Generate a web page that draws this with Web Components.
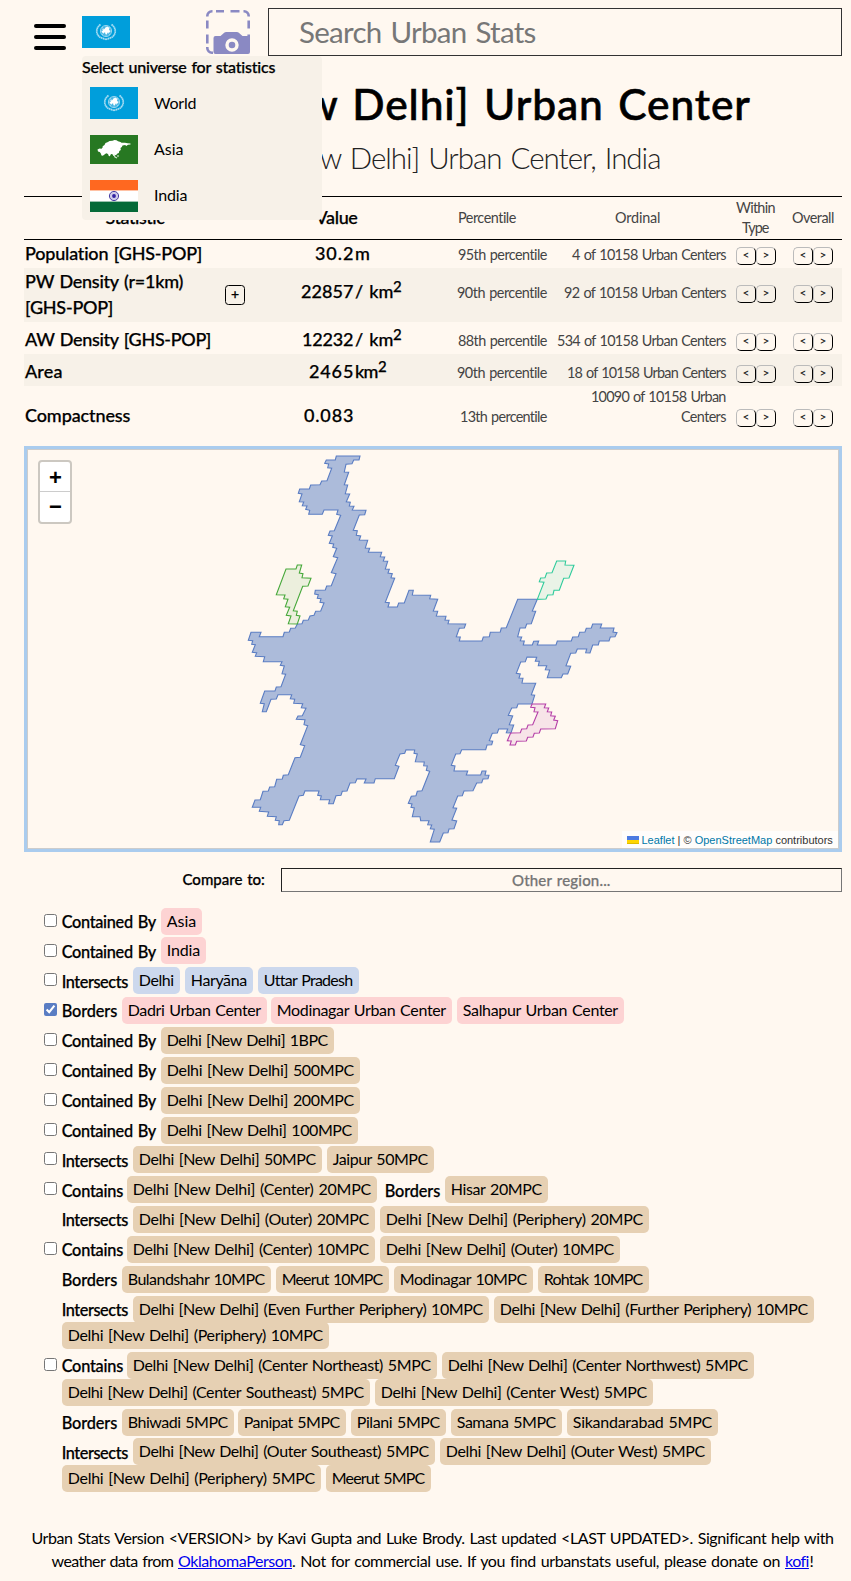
<!DOCTYPE html>
<html lang="en"><head><meta charset="utf-8"><title>Urban Stats</title>
<style>
html,body{margin:0;padding:0;background:#fff8f0;color:#000;font-family:Lato,"Liberation Sans",sans-serif}
</style></head><body>
<us-page></us-page>
<script>
const define=(n,c)=>customElements.define(n,c);
class Base extends HTMLElement{
  paint(html){(this.shadowRoot||this.attachShadow({mode:'open'})).innerHTML=html}
}
/* A single line of text whose tracking is adjusted to fill the width in "w". */
define('us-fit',class extends Base{
  connectedCallback(){
    const w=+this.getAttribute('w');
    this.paint(`<style>:host{display:block;white-space:nowrap;flex:none;width:${w}px}span{display:inline-block;text-decoration:inherit;word-spacing:.07em}</style><span><slot></slot></span>`);
    const s=this.shadowRoot.querySelector('span'),n=Math.max(1,this.textContent.length);
    let ls=0;
    for(let i=0;i<3;i++){ls+=(w+.4-(s.getBoundingClientRect().width-ls))/n;s.style.letterSpacing=ls.toFixed(3)+'px'}
  }
});
define('us-flag',class extends Base{
  connectedCallback(){
    const un=`<svg viewBox="0 0 48 32" width="48" height="32"><rect width="48" height="32" fill="#009edb"/>
      <g fill="none" stroke="#d5eefa"><circle cx="24" cy="15" r="5.600" stroke-width=".6" fill="#45b5e3"/>
      <path d="M24 9.500v11M18.500 15h11M20 11l8 8M28 11l-8 8" stroke-width=".4"/>
      <path d="M18.500 8.500C13.500 12 13.500 18.500 18.500 21.500L24 23.500M29.500 8.500C34.500 12 34.500 18.500 29.500 21.500L24 23.500" stroke="#a9ddf3" stroke-width="1.700" stroke-dasharray="1.6 .4"/></g>
      <path d="M20 12.500l2 1 1.500-2 2-1 2 1.500-.5 2 1.500 1-1.500 2-1.500-.5-.5 2-1.500-.5-.5-2-2 1.500-1.500-2 1.500-1z" fill="#fff"/></svg>`;
    const asia=`<svg viewBox="0 0 48 29" width="48" height="29"><rect width="48" height="29" fill="#277822"/>
      <path fill="#fff" d="M7.500 14.500l2-1 2 .3 1-1 .2-1.600 1.800-1.200 1-2 2.500-1 1.500-1 3-.3 2-.7 2 .3 1.500 1 2.500.7 1 .8 3.500 0 2.500.5 3 .2 0 .9-2.500.3-1.800 1.200-1-.8-2.700.5-.7 1.500-1.300.8.3 2-1.500 1.200-.5 1.800-1.700.9-1 1.500-1-.2-.6 1.500-1.200-.9-.8-1.400-1.500-.4-1.200 2.400-1-.4-.8-2-1.800-.6-1.700 1.200-1.700 1.300-1.300-.3-.8-2.300-1-1.200-1.700-.5z"/>
      <path d="M24 19.500l1 2.500 2 1M28 20v2" stroke="#d5e6d2" stroke-width="1.100" fill="none"/></svg>`;
    const india=`<svg viewBox="0 0 48 32" width="48" height="32"><rect width="48" height="32" fill="#fff"/><rect width="48" height="10.400" fill="#ff6820"/><rect y="21.600" width="48" height="10.400" fill="#046a38"/>
      <circle cx="24" cy="16" r="4.600" fill="#cfcbe9" stroke="#4b3fa5" stroke-width="1"/><circle cx="24" cy="16" r="1.900" fill="#3020a0"/></svg>`;
    this.paint(`<style>:host,svg{display:block}</style>${{un,asia,india}[this.getAttribute('kind')]}`);
  }
});
define('us-universe-menu',class extends Base{
  connectedCallback(){
    this.paint(`<style>:host{position:absolute;left:0;top:40px;width:240px;height:164px;box-sizing:border-box;background:#f7f1e8;border-radius:4px;z-index:5;font-size:16px;line-height:24px}
    .t{font-weight:500;-webkit-text-stroke:.25px #000;height:31px}.t us-fit{line-height:22px}
    .r{display:flex;align-items:center;gap:16px;padding-left:8px}.a{height:32px}.b{height:29px;margin:16px 0}.u us-fit{margin-top:-2px}</style>
    <div class="t"><us-fit w="193">Select universe for statistics</us-fit></div>
    <div class="r a"><us-flag kind="un"></us-flag><us-fit w="42">World</us-fit></div>
    <div class="r b u"><us-flag kind="asia"></us-flag><us-fit w="29">Asia</us-fit></div>
    <div class="r a u"><us-flag kind="india"></us-flag><us-fit w="33">India</us-fit></div>`);
  }
});
define('us-header',class extends Base{
  connectedCallback(){
    this.paint(`<style>:host{display:flex;height:64px;padding:0 9px 0 34px;align-items:flex-start}
    .m{width:32px;height:26px;margin-top:24px;display:flex;flex-direction:column;gap:7px}.m i{height:4px;background:#000;border-radius:2px}
    .u{position:relative;margin:16px 0 0 16px;width:48px}
    .c{margin:10px 0 0 76px}.c svg{display:block}
    .s{margin:8px 0 0 18px;width:574px;height:48px;box-sizing:border-box;border:1px solid #333;padding-left:30px;font-size:29.500px;line-height:46px;color:#777}</style>
    <div class="m"><i></i><i></i><i></i></div>
    <div class="u"><us-flag kind="un"></us-flag><us-universe-menu></us-universe-menu></div>
    <div class="c"><svg width="44" height="44" viewBox="0 0 44 44"><g fill="none" stroke="#8a89c3" stroke-width="2.600"><path d="M1.300 6.500V6a4.700 4.700 0 0 1 4.700-4.700h.5M10 1.300h8M24.500 1.300h9M37.500 1.300h.5a4.700 4.700 0 0 1 4.700 4.700v.5M1.300 10.500v8M1.300 24.500v9M42.700 10.500v8M42.700 24.500v4M1.300 37v1a4.700 4.700 0 0 0 4.700 4.700h1"/></g>
    <path fill="#8a89c3" d="M9.500 26h5l4-3.500q.7-.5 1.500-.5h11q.8 0 1.500.5l4 3.500H42q2 0 2 2v14q0 2-2 2H9.500q-2 0-2-2V28q0-2 2-2z"/><circle cx="26" cy="35" r="5" fill="none" stroke="#fff8f0" stroke-width="3.400"/></svg></div>
    <div class="s"><us-fit w="237">Search Urban Stats</us-fit></div>`);
  }
});
define('us-nav',class extends Base{
  connectedCallback(){
    this.paint(`<style>:host{display:flex;width:40px;height:18px}b{box-sizing:border-box;width:20px;height:18px;border:1.500px outset #333;border-color:#bbb #333 #333 #bbb;border-radius:5px;font:500 12px/14px Lato,sans-serif;text-align:center;color:#222}</style><b>&lt;</b><b>&gt;</b>`);
  }
});
define('us-stat',class extends Base{
  connectedCallback(){
    const a=k=>this.getAttribute(k)||'';
    const fit=s=>s.split(';').map(t=>{const[x,w]=t.split('|');return `<us-fit w="${w}">${x}</us-fit>`}).join('');
    const off=+a('base');
    this.paint(`<style>:host{display:grid;grid-template-columns:201px 128px 70px 124px 179px 10px 40px 17px 40px 9px;height:${a('h')}px;background:${a('bg')||'none'}}
    .n,.v,.w{font-weight:500;font-size:18px;line-height:26px;-webkit-text-stroke:.25px #000}
    .n{padding-left:1px;padding-top:${+a('nbase')-20}px}.v,.w{padding-top:${off-20}px}
    .v{display:flex;justify-content:flex-end}.w{padding-left:2px;display:flex}
    sup{font-size:15px;line-height:10px;margin-top:3px}
    .s{font-size:14.400px;line-height:20px;color:#444;padding-top:${off-15}px;display:flex;flex-direction:column;align-items:flex-end}
    .o{padding-top:${off-15-(a('ord').includes(';')?20:0)}px}
    us-nav{margin-top:${off-13}px}
    .p{display:inline-block;box-sizing:border-box;width:20px;height:20px;border:1.500px solid #000;border-radius:3.500px;margin:${off-13}px auto 0 0;font:500 14px/16px Lato;text-align:center;transform:translateY(${20-off}px)}</style>
    <div class="n">${fit(a('name'))}</div>
    <div class="v">${a('plus')?'<span class="p">+</span>':''}${fit(a('val'))}</div>
    <div class="w">${a('unit')?fit(a('unit')):''}${a('sq')?'<sup>2</sup>':''}</div>
    <div class="s">${fit(a('pct'))}</div><div class="s o">${fit(a('ord'))}</div><i></i><us-nav></us-nav><i></i><us-nav></us-nav>`);
  }
});
define('us-table',class extends Base{
  connectedCallback(){
    this.paint(`<style>:host{display:block;margin:0 9px 0 24px}
    .h{display:flex;align-items:center;height:42px;border:solid #000;border-width:1px 0;color:#444;font-size:14.400px;line-height:20px}
    .b{font-size:18px;font-weight:500;-webkit-text-stroke:.25px #000;color:#000;line-height:22px;margin-top:-2px}</style>
    <div class="h"><us-fit class="b" w="59" style="margin-left:81.500px">Statistic</us-fit><us-fit class="b" w="42" style="margin-left:151px">Value</us-fit>
    <us-fit w="58" style="margin-left:100.500px">Percentile</us-fit><us-fit w="45" style="margin-left:99px">Ordinal</us-fit>
    <div style="margin-left:76px;width:40px"><us-fit w="39">Within</us-fit><us-fit w="27" style="margin-left:6px">Type</us-fit></div><us-fit w="42" style="margin-left:16px">Overall</us-fit></div>
    <us-stat h="28" nbase="20" base="20" name="Population [GHS-POP]|177" val="30.2|38" unit="m|14" pct="95th percentile|89" ord="4 of 10158 Urban Centers|154"></us-stat>
    <us-stat h="54" nbase="20" base="30" bg="#f7f1e8" plus="1" name="PW Density (r=1km)|158;[GHS-POP]|88" val="22857|52" unit="/ km|38" sq="1" pct="90th percentile|90" ord="92 of 10158 Urban Centers|162"></us-stat>
    <us-stat h="32" nbase="24" base="24" name="AW Density [GHS-POP]|186" val="12232|51" unit="/ km|38" sq="1" pct="88th percentile|89" ord="534 of 10158 Urban Centers|169"></us-stat>
    <us-stat h="32" nbase="24" base="24" bg="#f7f1e8" name="Area|37" val="2465|44" unit="km|23" sq="1" pct="90th percentile|90" ord="18 of 10158 Urban Centers|159"></us-stat>
    <us-stat h="48" nbase="36" base="36" name="Compactness|105" val="0.083|49" pct="13th percentile|87" ord="10090 of 10158 Urban|135;Centers|45"></us-stat>`);
  }
});
/* Outlines are stored as tiles: [tile origin x, y, "points in thirds of a pixel"]. */
const CITY=[[202,-10,'319,48 390,48 387,60 371,60 366,71 348,73 343,96 356,97 343,134 353,135 346,161 359,162 349,185 361,187 358,198 372,199 367,210 408,211 404,224 388,225 370,271 382,272 379,286 392,288 388,300 413,301 406,324 419,325 415,337 455,337 451,350 464,351 460,363 473,364 466,387 478,388 474,399 487,401 483,413 494,415 466,487 478,488 474,501 502,501 506,489 523,489 537,451 550,451 547,465 602,466 599,476 623,478 610,513 623,514 619,528 648,529 645,540 657,541 654,551'],
[402,90,'107,252 103,264 88,265 79,290 91,291 88,303 156,303 160,291 178,290 181,277 211,276 214,264 229,263 263,178 322,178 307,213 317,214 304,251 290,252 286,264 270,264 263,290 275,291 271,302 283,303 280,315 307,315 311,304 326,303 322,315 378,315 382,303 424,303 428,291 445,290 449,277 465,276 469,265 484,264 488,252 515,252 511,264 552,264 549,276 561,278 555,290 541,291 537,303 508,303 505,315 488,315 480,339 467,338 470,327 442,327 437,339 422,340 408,377 422,379 413,402 399,402 394,413 352,413 359,390 346,389 350,377 325,377 328,364 316,364 320,352 291,351 286,365 272,366 259,400 271,402 267,414 279,415 276,429 317,430 304,464 314,466 306,492 264,492 260,503 245,504 235,526 248,528 238,554 251,555 243,579 229,578 233,567 206,567 202,579 187,580 178,602 188,604 185,614 171,615'],
[352,250,'317,149 245,149 240,161 227,162 214,196 225,198 222,213 263,213 259,225 302,225 306,213 318,213 315,225 327,226 324,236 309,237 305,248 290,249 279,272 252,273 247,287 233,288 219,323 230,325 216,360 230,363 222,386 207,387 204,398 190,399 179,426 151,426 163,388 151,386 155,375 143,374 147,362 122,362 120,350 97,350 103,324 93,322 96,312 85,310 94,289 108,287 112,274 126,272 149,214 139,211 142,198 131,197 133,186 106,185 112,162 102,160 104,150 78,149 74,160 60,162 46,196 57,199 43,236'],
[202,170,'436,476 432,489 403,489 408,477 381,476 376,488 360,489 351,513 337,514 333,526 318,527 310,551 296,551 299,539 271,539 274,528 263,526 267,513 225,512 220,526 207,528 178,601 162,602 157,614 146,614 148,602 136,601 139,590 112,589 116,576 88,574 92,562 67,562 75,540 91,539 99,514 115,513 119,501 134,500 140,478 157,477 160,466 175,464 195,413 211,412 224,377 211,374 233,317 222,314 225,299 199,298 204,288 217,287 228,265 214,263 218,251 191,250 194,238 181,236 185,224 144,224 139,237 123,238 109,275 97,275 103,251 91,250 104,213 135,213 139,201 153,200 167,163 156,161 163,138 151,136 156,125 100,125 104,110 76,109 80,98 67,97 76,74 65,73 68,62 55,61 63,37 93,37 88,50 159,50 163,37 178,36 182,25 196,24'],
[202,-10,'202,552 216,551 220,541 235,540 240,528 252,526 257,514 272,513 282,489 270,487 273,476 262,475 265,464 254,462 256,451 286,450 290,438 304,437 318,401 304,398 323,353 310,350 320,325 308,322 311,312 298,310 307,288 295,286 300,273 313,272 332,226 320,223 324,210 282,210 277,223 236,223 239,211 227,208 231,198 217,197 221,186 208,185 216,162 205,160 209,147 238,147 242,135 270,134 275,123 291,122 305,85 293,83 296,72 284,70 289,60 316,60']];
const WEST=[[202,-10,'168,387 198,387 202,375 215,375 208,399 219,401 216,413 243,415 234,438 218,439 190,512 202,514 199,526 210,528 202,552 175,551 183,528 169,526 179,502 166,500 174,478 161,476 165,465 139,464']];
const NORTH=[[402,90,'380,63 407,63 405,75 432,76 417,114 401,115 388,151 372,151 369,164 353,165 348,177 322,178 342,127 328,125 332,114 345,113 350,99 366,98']];
const EAST=[[402,90,'306,492 347,492 343,503 356,504 352,515 365,516 362,527 376,529 371,540 383,542 376,566 332,567 328,579 313,580 309,591 293,592 289,603 260,604 256,615 240,615 244,603 232,602 242,579 271,578 275,567 290,566 294,555 308,554 324,516 312,515 315,503 302,502']];
const outline=tiles=>tiles.map(([x,y,p])=>p.split(' ').map(q=>{const[a,b]=q.split(',');return (x+a/3).toFixed(1)+','+(y+b/3).toFixed(1)}).join(' ')).join(' ');
define('us-map',class extends Base{
  connectedCallback(){
    const poly=(t,c,o)=>`<polygon points="${outline(t)}" fill="${c}" fill-opacity="${o}" stroke="${c}" stroke-width="1.100"/>`;
    this.paint(`<style>:host{display:block;position:relative;box-sizing:border-box;height:406px;margin:12px 9px 0 24px;border:4px solid #aaccee}
    .m{display:block}
    .z{position:absolute;left:10px;top:10px;width:30px;border:2px solid #ccc8c1;border-radius:4px;background:#fff;font:700 22px/30px "Liberation Sans",sans-serif;text-align:center;text-indent:1px}
    .z div{height:29px;line-height:31px}.z div+div{height:30px;line-height:29px;border-top:1px solid #ccc}
    .a{position:absolute;right:0;bottom:0;width:216.500px;height:17px;box-sizing:border-box;padding:0 5px;background:#fffdfb;display:flex;align-items:center;font:11px/16px "Liberation Sans",sans-serif;color:#333;white-space:pre}
    .a svg{margin-right:3px}u{text-decoration:none;color:#0078a8}.e{position:absolute;inset:-1px;border:1px solid #ccc;pointer-events:none}</style>
    <svg class="m" width="810" height="398">${poly(CITY,'#5a7dc3',.5)}${poly(WEST,'#46a83a',.1)}${poly(EAST,'#b53fa8',.1)}${poly(NORTH,'#30cb9c',.1)}</svg>
    <div class="z"><div>+</div><div>−</div></div>
    <div class="a"><svg width="12" height="8"><path fill="#4c7be1" d="M0 0h12v4H0z"/><path fill="#ffd500" d="M0 4h12v3H0z"/><path fill="#e0bc00" d="M0 7h12v1H0z"/></svg><u>Leaflet</u> | © <u>OpenStreetMap</u> contributors</div><div class="e"></div>`);
  }
});
define('us-compare',class extends Base{
  connectedCallback(){
    this.paint(`<style>:host{display:flex;margin:16px 9px 0 24px;padding-left:158.500px;height:24px;font-weight:500;font-size:15px;line-height:22px;-webkit-text-stroke:.25px}
    us-fit{line-height:23px}
    .i{box-sizing:border-box;width:561px;height:24px;margin-left:auto;border:1px solid;border-color:#222 #767676 #767676 #222;padding-left:230px;color:#757575}</style>
    <us-fit w="82">Compare to:</us-fit><div class="i"><us-fit w="98">Other region...</us-fit></div>`);
  }
});
define('us-chip',class extends Base{
  connectedCallback(){
    const w=+this.getAttribute('w');
    this.paint(`<style>:host{display:block;flex:none;box-sizing:border-box;width:${w}px;height:27px;padding-left:5.800px;border-radius:5px;font-size:16px;line-height:26px;background:var(--chip,#e6d0b3)}</style><us-fit w="${w-12}">${this.textContent}</us-fit>`);
  }
});
/* One line of related regions. Items are "text|left|right"; names starting with * are labels. */
define('us-related',class extends Base{
  connectedCallback(){
    const a=k=>this.getAttribute(k);let x=62;
    const items=a('items').split(';').map(s=>{const[t,l,r]=s.split('|');const m=l-x;x=+r;
      return t[0]==='*'?`<us-fit class="l" w="${r-l}" style="margin-left:${m}px">${t.slice(1)}</us-fit>`:`<us-chip w="${r-l}" style="margin-left:${m}px">${t}</us-chip>`}).join('');
    this.paint(`<style>:host{display:flex;align-items:flex-start;height:${a('h')}px}.k{width:18px;margin-left:44px;flex:none}
    input{display:block;margin:${a('cb')||6}px 0 0;width:13px;height:13px;accent-color:#5a7dc3}
    .l{font-size:16.300px;font-weight:500;line-height:26px;padding-top:${a('lb')||1}px;text-indent:-.2px;-webkit-text-stroke:.25px #000}</style>
    <div class="k">${a('cb')?`<input type="checkbox"${this.hasAttribute('on')?' checked':''}>`:''}</div>${items}`);
  }
});
define('us-related-list',class extends Base{
  connectedCallback(){
    const R=[[29,6,'*Contained By|62|156;Asia|161|202','#fdd3d3'],[30,7,'*Contained By|62|156;India|161|206','#fdd3d3',2],
    [30,6,'*Intersects|62|128;Delhi|133|180;Haryāna|185|253;Uttar Pradesh|258|359','#ccd8ed',2],
    [30,6,'*Borders|62|117;Dadri Urban Center|122|267;Modinagar Urban Center|271|452;Salhapur Urban Center|457|624','#fdd3d3',1,1],
    [30,6,'*Contained By|62|156;Delhi [New Delhi] 1BPC|161|334'],[30,6,'*Contained By|62|156;Delhi [New Delhi] 500MPC|161|360'],
    [30,6,'*Contained By|62|156;Delhi [New Delhi] 200MPC|161|360'],[29,6,'*Contained By|62|156;Delhi [New Delhi] 100MPC|161|358'],
    [30,6,'*Intersects|62|128;Delhi [New Delhi] 50MPC|133|322;Jaipur 50MPC|327|434',0,2],
    [30,6,'*Contains|62|123;Delhi [New Delhi] (Center) 20MPC|127|377;*Borders|385|440;Hisar 20MPC|445|548',0,2],
    [30,0,'*Intersects|62|128;Delhi [New Delhi] (Outer) 20MPC|133|375;Delhi [New Delhi] (Periphery) 20MPC|380|649'],
    [30,6,'*Contains|62|123;Delhi [New Delhi] (Center) 10MPC|127|375;Delhi [New Delhi] (Outer) 10MPC|380|620'],
    [30,0,'*Borders|62|117;Bulandshahr 10MPC|122|271;Meerut 10MPC|276|389;Modinagar 10MPC|394|533;Rohtak 10MPC|538|649'],
    [26,0,'*Intersects|62|128;Delhi [New Delhi] (Even Further Periphery) 10MPC|133|489;Delhi [New Delhi] (Further Periphery) 10MPC|494|814'],
    [30,0,'Delhi [New Delhi] (Periphery) 10MPC|62|329'],
    [27,6,'*Contains|62|123;Delhi [New Delhi] (Center Northeast) 5MPC|127|437;Delhi [New Delhi] (Center Northwest) 5MPC|442|754'],
    [30,0,'Delhi [New Delhi] (Center Southeast) 5MPC|62|370;Delhi [New Delhi] (Center West) 5MPC|375|653'],
    [29,0,'*Borders|62|117;Bhiwadi 5MPC|122|234;Panipat 5MPC|238|346;Pilani 5MPC|351|446;Samana 5MPC|451|562;Sikandarabad 5MPC|567|718'],
    [27,0,'*Intersects|62|128;Delhi [New Delhi] (Outer Southeast) 5MPC|133|435;Delhi [New Delhi] (Outer West) 5MPC|440|711',0,2],
    [27,0,'Delhi [New Delhi] (Periphery) 5MPC|62|321;Meerut 5MPC|326|431']];
    this.paint(`<style>:host{display:block;margin-top:16px}</style>`+R.map(([h,cb,items,c,lb,on])=>`<us-related h="${h}" ${cb?`cb="${cb}"`:''} ${lb?`lb="${lb}"`:''} ${on?'on':''} style="${c?`--chip:${c}`:''}" items="${items}"></us-related>`).join(''));
  }
});
define('us-footer',class extends Base{
  connectedCallback(){
    this.paint(`<style>:host{display:block;margin-top:34px;font-size:16px;line-height:23px}div{display:flex}.k{color:#00e;text-decoration:underline}</style>
    <div><us-fit w="802" style="margin-left:31.500px">Urban Stats Version &lt;VERSION&gt; by Kavi Gupta and Luke Brody. Last updated &lt;LAST UPDATED&gt;. Significant help with</us-fit></div>
    <div><us-fit w="122" style="margin-left:51.500px">weather data from</us-fit><us-fit class="k" w="114" style="margin-left:4.500px">OklahomaPerson</us-fit><us-fit w="488">. Not for commercial use. If you find urbanstats useful, please donate on</us-fit><us-fit class="k" w="24" style="margin-left:5px">kofi</us-fit><us-fit w="4" style="margin-left:.5px">!</us-fit></div>`);
  }
});
define('us-page',class extends Base{
  connectedCallback(){
    this.paint(`<style>:host{display:block;width:851px;height:1581px;overflow:hidden}
    .t{height:78px;font-size:42.500px;line-height:80px;font-weight:500;-webkit-text-stroke:.6px #000;padding-left:116.500px}
    .s{height:54px;font-size:29.500px;line-height:32px;font-weight:300;color:#222;padding-left:206px}</style>
    <us-header></us-header><div class="t"><us-fit w="633">Delhi [New Delhi] Urban Center</us-fit></div>
    <div class="s"><us-fit w="455">Delhi [New Delhi] Urban Center, India</us-fit></div>
    <us-table></us-table><us-map></us-map><us-compare></us-compare><us-related-list></us-related-list><us-footer></us-footer>`);
  }
});
</script></body></html>
